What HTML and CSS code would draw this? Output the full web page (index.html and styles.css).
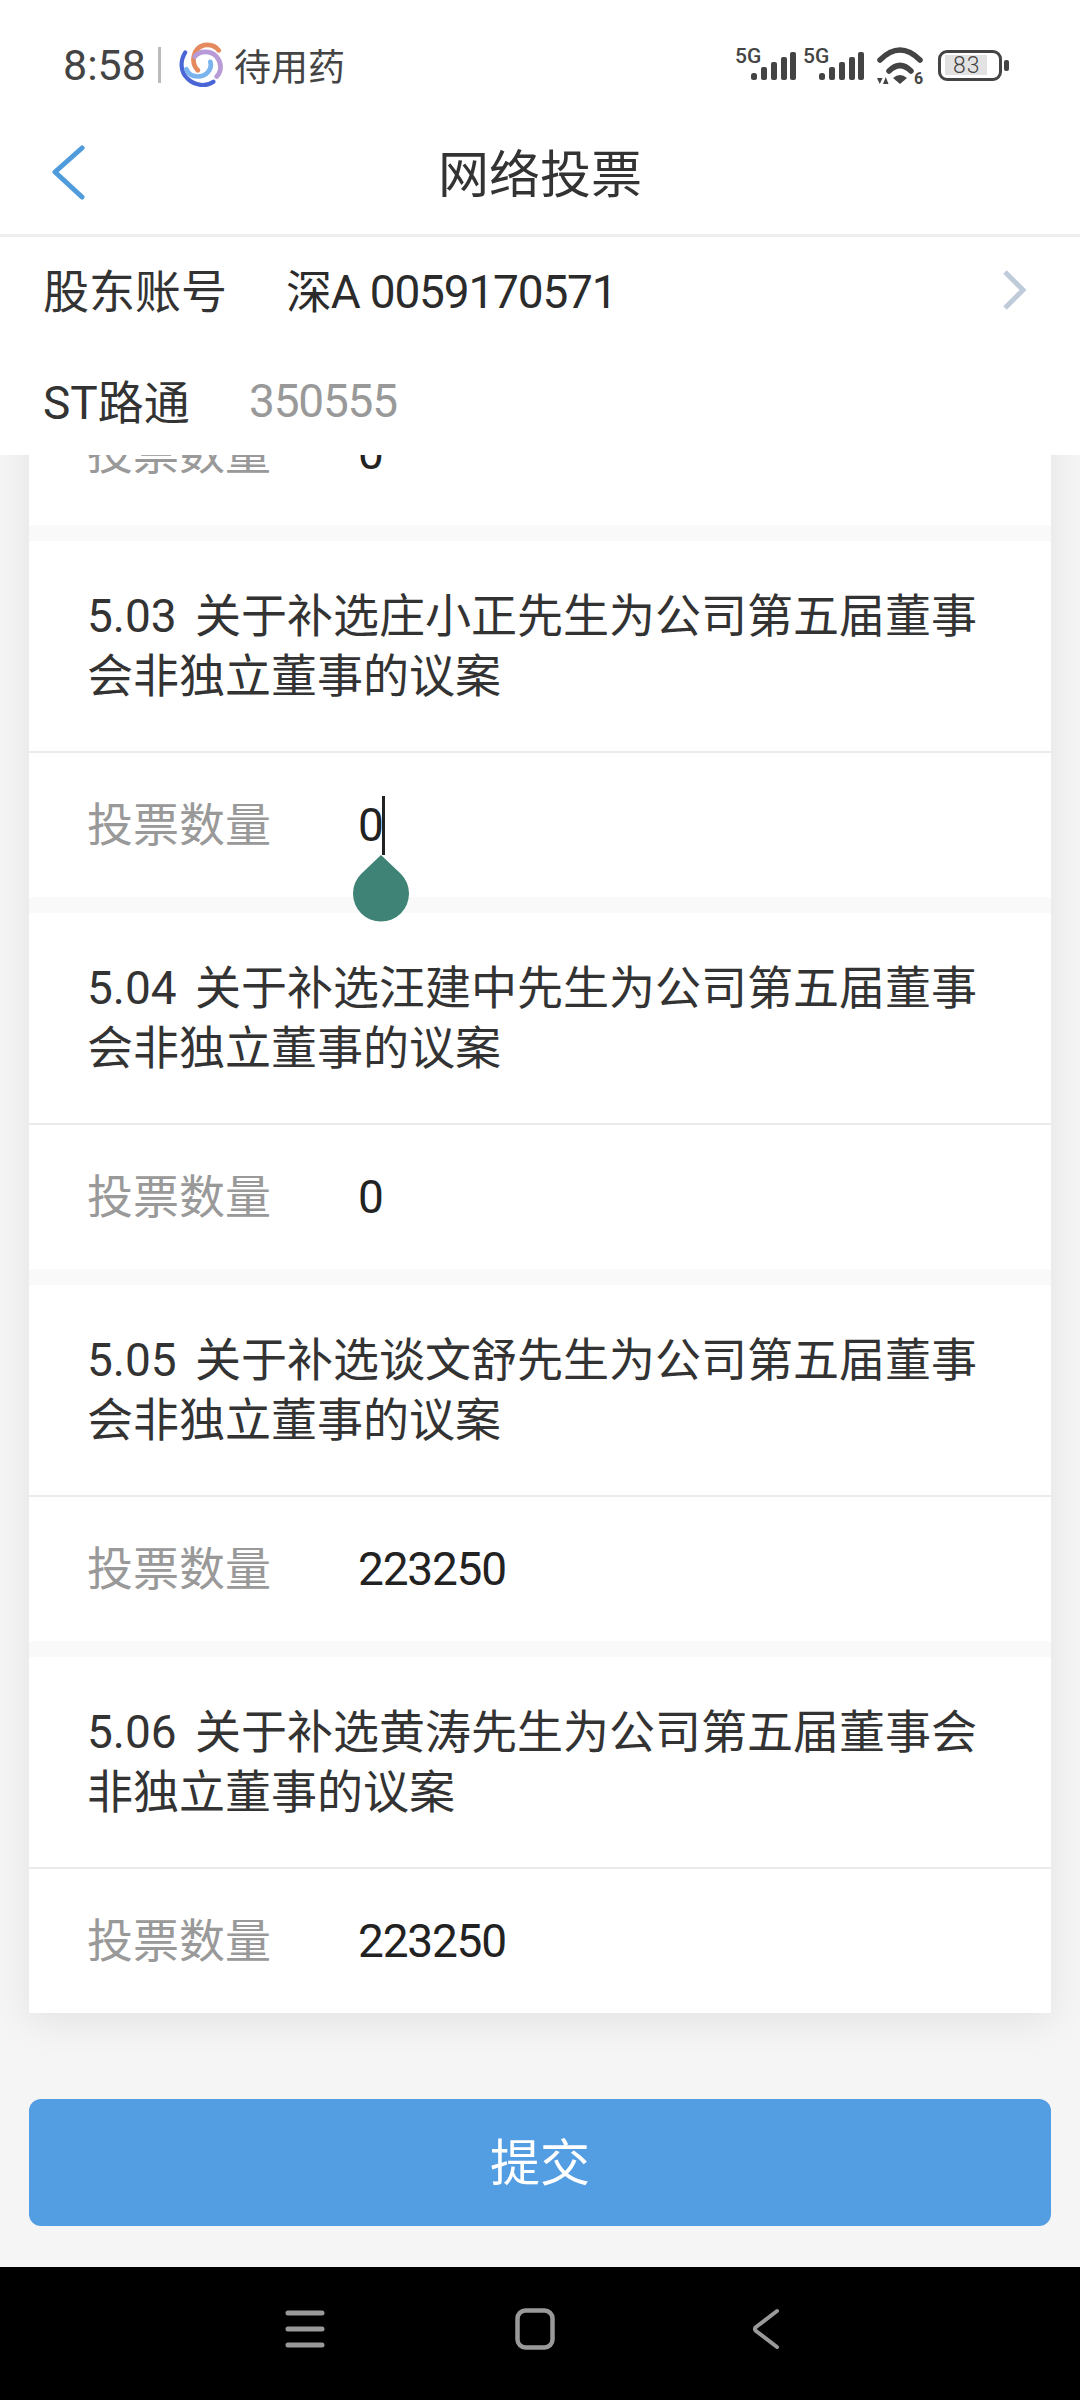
FILE: index.html
```html
<!DOCTYPE html>
<html lang="zh-CN">
<head>
  <meta charset="UTF-8">
  <title>网络投票</title>
  <link rel="stylesheet" href="styles.css">
</head>
<body>
  <div class="app">
    <header class="top">
      <div class="status-bar">
        <div class="status-left">
          <span class="time">8:58</span>
          <span class="status-sep"></span>
          <svg class="app-logo" viewBox="0 0 44 44" fill="none" stroke-linecap="round">
            <path d="M18 27C11 20 13 6 24 3C30 2 35 4 38 8" stroke="#e58a5e" stroke-width="4.5"/>
            <path d="M15 14C20 8 30 8 36 14C41 20 41 28 36 33" stroke="#b79ad6" stroke-width="4.5"/>
            <path d="M6 10C1 18 1 28 8 35C15 42 26 43 33 38" stroke="#4a66d6" stroke-width="4"/>
            <path d="M30 19C32 26 26 33 18 33C13 33 9 31 7 26" stroke="#7ab3ee" stroke-width="4.5"/>
          </svg>
          <span class="app-name">待用药</span>
        </div>
        <div class="status-right">
          <svg class="signal" viewBox="0 0 61 40">
            <text x="0" y="21" class="signal-label">5G</text>
            <rect x="16" y="31" width="6" height="7" rx="2.5"/>
            <rect x="26" y="25" width="6" height="13" rx="2"/>
            <rect x="36" y="20" width="6" height="18" rx="2"/>
            <rect x="46" y="15" width="6" height="23" rx="2"/>
            <rect x="55" y="10" width="6" height="28" rx="2"/>
          </svg>
          <svg class="signal" viewBox="0 0 61 40">
            <text x="0" y="21" class="signal-label">5G</text>
            <rect x="16" y="31" width="6" height="7" rx="2.5"/>
            <rect x="26" y="25" width="6" height="13" rx="2"/>
            <rect x="36" y="20" width="6" height="18" rx="2"/>
            <rect x="46" y="15" width="6" height="23" rx="2"/>
            <rect x="55" y="10" width="6" height="28" rx="2"/>
          </svg>
          <svg class="wifi" viewBox="0 0 50 44" fill="none">
            <path d="M3 15Q23 -5 43 15" stroke="#444" stroke-width="5.500" stroke-linecap="round"/>
            <path d="M12 26Q23 15 34 26" stroke="#444" stroke-width="5.500" stroke-linecap="round"/>
            <path d="M16 33Q23 27 30 33L23 39Z" fill="#444"/>
            <path d="M0 33H5.500L2.800 39ZM6 39H11.500L8.800 32Z" fill="#444"/>
            <text x="37" y="39" class="wifi-label">6</text>
          </svg>
          <div class="battery">
            <div class="battery-body"><span class="battery-level">83</span></div>
            <span class="battery-cap"></span>
          </div>
        </div>
      </div>
      <div class="nav-bar">
        <svg class="back" viewBox="0 0 36 56" fill="none">
          <path d="M31 3L4 27L31 52" stroke="#4f9bdc" stroke-width="5" stroke-linecap="round" stroke-linejoin="round"/>
        </svg>
        <h1>网络投票</h1>
      </div>
      <div class="account-row">
        <span class="account-label">股东账号</span>
        <span class="account-value">深A 0059170571</span>
        <svg class="more" viewBox="0 0 28 42" fill="none">
          <path d="M5 3L23 21L5 39" stroke="#c0cbd9" stroke-width="5"/>
        </svg>
      </div>
      <div class="stock-row">
        <span class="stock-name">ST路通</span>
        <span class="stock-code">350555</span>
      </div>
    </header>

    <main class="content">
      <div class="card">
        <div class="vote-row">
          <span class="vote-label">投票数量</span>
          <span class="vote-value">0</span>
        </div>
        <div class="gap"></div>
        <div class="item-title">5.03 关于补选庄小正先生为公司第五届董事会非独立董事的议案</div>
        <div class="vote-row">
          <span class="vote-label">投票数量</span>
          <span class="vote-value editing">0<svg class="handle" viewBox="0 0 56 68"><path d="M28 0L8 19A28 28 0 1 0 48 19Z" fill="#3f8376"/></svg></span>
        </div>
        <div class="gap"></div>
        <div class="item-title">5.04 关于补选汪建中先生为公司第五届董事会非独立董事的议案</div>
        <div class="vote-row">
          <span class="vote-label">投票数量</span>
          <span class="vote-value">0</span>
        </div>
        <div class="gap"></div>
        <div class="item-title">5.05 关于补选谈文舒先生为公司第五届董事会非独立董事的议案</div>
        <div class="vote-row">
          <span class="vote-label">投票数量</span>
          <span class="vote-value">223250</span>
        </div>
        <div class="gap"></div>
        <div class="item-title">5.06 关于补选黄涛先生为公司第五届董事会非独立董事的议案</div>
        <div class="vote-row">
          <span class="vote-label">投票数量</span>
          <span class="vote-value">223250</span>
        </div>
      </div>
      <button class="submit">提交</button>
    </main>

    <footer class="sys-nav">
      <svg class="sys-icon" viewBox="0 0 40 42" fill="none" stroke="#999" stroke-width="5" stroke-linecap="round">
        <path d="M3 5H37M3 21H37M3 37H37"/>
      </svg>
      <svg class="sys-icon" viewBox="0 0 40 42" fill="none" stroke="#999" stroke-width="4.500">
        <rect x="2.500" y="2.500" width="35" height="37" rx="8"/>
      </svg>
      <svg class="sys-icon" viewBox="0 0 40 42" fill="none" stroke="#999" stroke-width="4" stroke-linecap="round" stroke-linejoin="round">
        <path d="M32 3L11 19Q9 21 11 23L32 39"/>
      </svg>
    </footer>
  </div>
</body>
</html>
```

FILE: styles.css
```css
* {
  box-sizing: border-box;
}

html, body {
  margin: 0;
  height: 100%;
}

body {
  font-family: Roboto, "Noto Sans CJK SC", sans-serif;
  background: #f5f5f5;
  color: #333;
}

.app {
  display: flex;
  flex-direction: column;
  height: 2400px;
  overflow: hidden;
}

/* top part stays over the scrolled list */
.top {
  position: relative;
  z-index: 2;
  height: 455px;
  background: #fff;
}

.status-bar {
  display: flex;
  justify-content: space-between;
  align-items: center;
  height: 130px;
  padding: 0 71px 0 63px;
}

.status-left {
  display: flex;
  align-items: center;
}

.time {
  font-size: 43px;
  color: #444;
}

.status-sep {
  width: 3px;
  height: 36px;
  margin: 0 18px 0 12px;
  background: #bbb;
}

.app-logo {
  width: 46px;
  height: 46px;
  margin-right: 9px;
}

.app-name {
  font-size: 37px;
  color: #444;
}

.status-right {
  display: flex;
  align-items: center;
}

.signal {
  width: 61px;
  height: 40px;
  margin: 0 7px 6px 0;
  fill: #444;
}

.signal-label {
  font-size: 21px;
  font-weight: 500;
}

.wifi {
  width: 50px;
  height: 44px;
  margin: 4px 11px 0 6px;
}

.wifi-label {
  font-size: 16px;
  font-weight: 700;
  fill: #444;
}

.battery {
  display: flex;
  align-items: center;
}

.battery-body {
  width: 64px;
  height: 31px;
  padding: 2px 12px 2px 4px;
  border: 3px solid #444;
  border-radius: 9px;
}

.battery-level {
  display: block;
  width: 42px;
  height: 20px;
  padding-left: 8px;
  background: #e2e2e2;
  font-size: 23px;
  font-weight: 300;
  line-height: 21px;
  letter-spacing: 1px;
  color: #444;
}

.battery-cap {
  width: 5px;
  height: 11px;
  margin-left: 2px;
  border-radius: 2px;
  background: #444;
}

.nav-bar {
  position: relative;
  display: flex;
  justify-content: center;
  align-items: center;
  height: 107px;
  padding-bottom: 22px;
  border-bottom: 3px solid #eee;
}

.nav-bar h1 {
  margin: 0;
  font-size: 51px;
  font-weight: 400;
  color: #333;
}

.back {
  position: absolute;
  left: 51px;
  top: 15px;
  width: 36px;
  height: 56px;
}

.account-row {
  display: flex;
  align-items: center;
  height: 104px;
  padding: 0 52px 2px 43px;
}

.account-label {
  width: 243px;
  font-size: 46px;
}

.account-value {
  flex: 1;
  font-size: 46px;
  letter-spacing: -1.2px;
  color: #2b2b2b;
}

.more {
  width: 28px;
  height: 42px;
  margin-top: 4px;
}

.stock-row {
  display: flex;
  align-items: center;
  height: 114px;
  padding: 2px 43px 0;
}

.stock-name {
  width: 206px;
  font-size: 46px;
}

.stock-code {
  padding-top: 4px;
  font-size: 46px;
  letter-spacing: -1.2px;
  color: #999;
}

.content {
  display: flex;
  flex-direction: column;
  flex: 1;
  padding: 0 29px;
}

/* list is scrolled, the first row is cut by the header */
.card {
  margin-top: -74px;
  background: #fff;
  box-shadow: 0 8px 36px rgba(0, 0, 0, 0.08);
}

.item-title {
  height: 212px;
  padding: 45px 58px 0;
  border-bottom: 2px solid #ebebeb;
  font-size: 46px;
  line-height: 60px;
  word-spacing: 7px;
  color: #333;
}

.vote-row {
  display: flex;
  align-items: center;
  height: 144px;
  padding: 0 58px;
}

.vote-label {
  width: 271px;
  padding-bottom: 8px;
  font-size: 46px;
  color: #999;
}

.vote-value {
  font-size: 46px;
  letter-spacing: -1.2px;
  color: #222;
}

.editing {
  position: relative;
  border-right: 3px solid #222;
  line-height: 59px;
  letter-spacing: -2px;
}

.handle {
  position: absolute;
  left: 100%;
  top: 59px;
  width: 56px;
  height: 68px;
  margin-left: -29px;
}

.gap {
  height: 16px;
  background: #f9f9f9;
}

.submit {
  height: 127px;
  margin-top: 86px;
  padding-bottom: 8px;
  border: none;
  border-radius: 12px;
  background: #539de3;
  color: #fff;
  font-family: inherit;
  font-size: 50px;
}

.sys-nav {
  display: flex;
  justify-content: center;
  align-items: center;
  gap: 190px;
  height: 133px;
  padding: 0 10px 9px 0;
  background: #000;
}

.sys-icon {
  width: 40px;
  height: 42px;
}
```
